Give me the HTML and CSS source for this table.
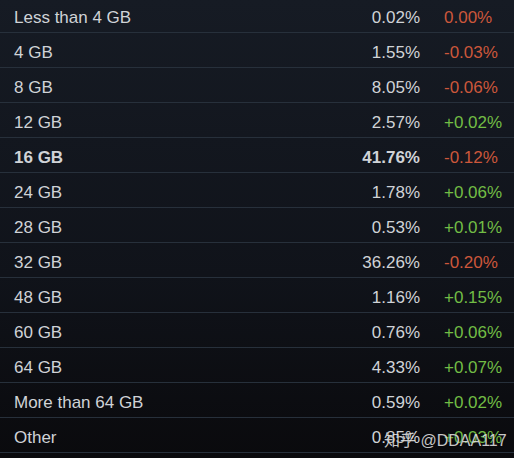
FILE: index.html
```html
<!DOCTYPE html>
<html lang="en">
<head>
    <meta charset="UTF-8">
    <meta name="viewport" content="width=device-width, initial-scale=1.0">
    <title>System RAM</title>
    <link rel="stylesheet" href="styles.css">
</head>
<body>
    <div class="stats">
        <div class="row"><span class="name">Less than 4 GB</span><span class="pct">0.02%</span><span class="change down">0.00%</span></div>
        <div class="row"><span class="name">4 GB</span><span class="pct">1.55%</span><span class="change down">-0.03%</span></div>
        <div class="row"><span class="name">8 GB</span><span class="pct">8.05%</span><span class="change down">-0.06%</span></div>
        <div class="row"><span class="name">12 GB</span><span class="pct">2.57%</span><span class="change up">+0.02%</span></div>
        <div class="row top"><span class="name">16 GB</span><span class="pct">41.76%</span><span class="change down">-0.12%</span></div>
        <div class="row"><span class="name">24 GB</span><span class="pct">1.78%</span><span class="change up">+0.06%</span></div>
        <div class="row"><span class="name">28 GB</span><span class="pct">0.53%</span><span class="change up">+0.01%</span></div>
        <div class="row"><span class="name">32 GB</span><span class="pct">36.26%</span><span class="change down">-0.20%</span></div>
        <div class="row"><span class="name">48 GB</span><span class="pct">1.16%</span><span class="change up">+0.15%</span></div>
        <div class="row"><span class="name">60 GB</span><span class="pct">0.76%</span><span class="change up">+0.06%</span></div>
        <div class="row"><span class="name">64 GB</span><span class="pct">4.33%</span><span class="change up">+0.07%</span></div>
        <div class="row"><span class="name">More than 64 GB</span><span class="pct">0.59%</span><span class="change up">+0.02%</span></div>
        <div class="row"><span class="name">Other</span><span class="pct">0.85%</span><span class="change up">+0.03%</span></div>
    </div>
    <div class="watermark">知乎 @DDAA117</div>
</body>
</html>
```

FILE: styles.css
```css
html, body {
    height: 100%;
}

body {
    margin: 0;
    background: linear-gradient(#161b24, #10131a 60%, #0a0a0d);
    font-family: "Liberation Sans", Arial, sans-serif;
    font-size: 17px;
    color: #d0d3d7;
    position: relative;
    overflow: hidden;
}

.stats {
    margin-top: -2px;
}

.row {
    display: grid;
    grid-template-columns: 1fr auto 70px;
    align-items: center;
    height: 34px;
    box-sizing: content-box;
    border-bottom: 1px solid #27303b;
    padding-left: 14px;
}

.row span {
    padding-top: 5px;
}

.row.top {
    font-weight: bold;
}

.pct {
    text-align: right;
    padding-right: 24px;
}

.change {
    font-weight: normal;
}

.down {
    color: #cc573b;
}

.up {
    color: #72bd45;
}

.watermark {
    position: absolute;
    left: 384px;
    top: 427px;
    white-space: nowrap;
    font-family: "Liberation Sans", "Noto Sans CJK SC", sans-serif;
    font-size: 16px;
    color: rgba(235, 235, 235, 0.85);
    text-shadow: 0 0 2px rgba(0, 0, 0, 0.6);
}
```
